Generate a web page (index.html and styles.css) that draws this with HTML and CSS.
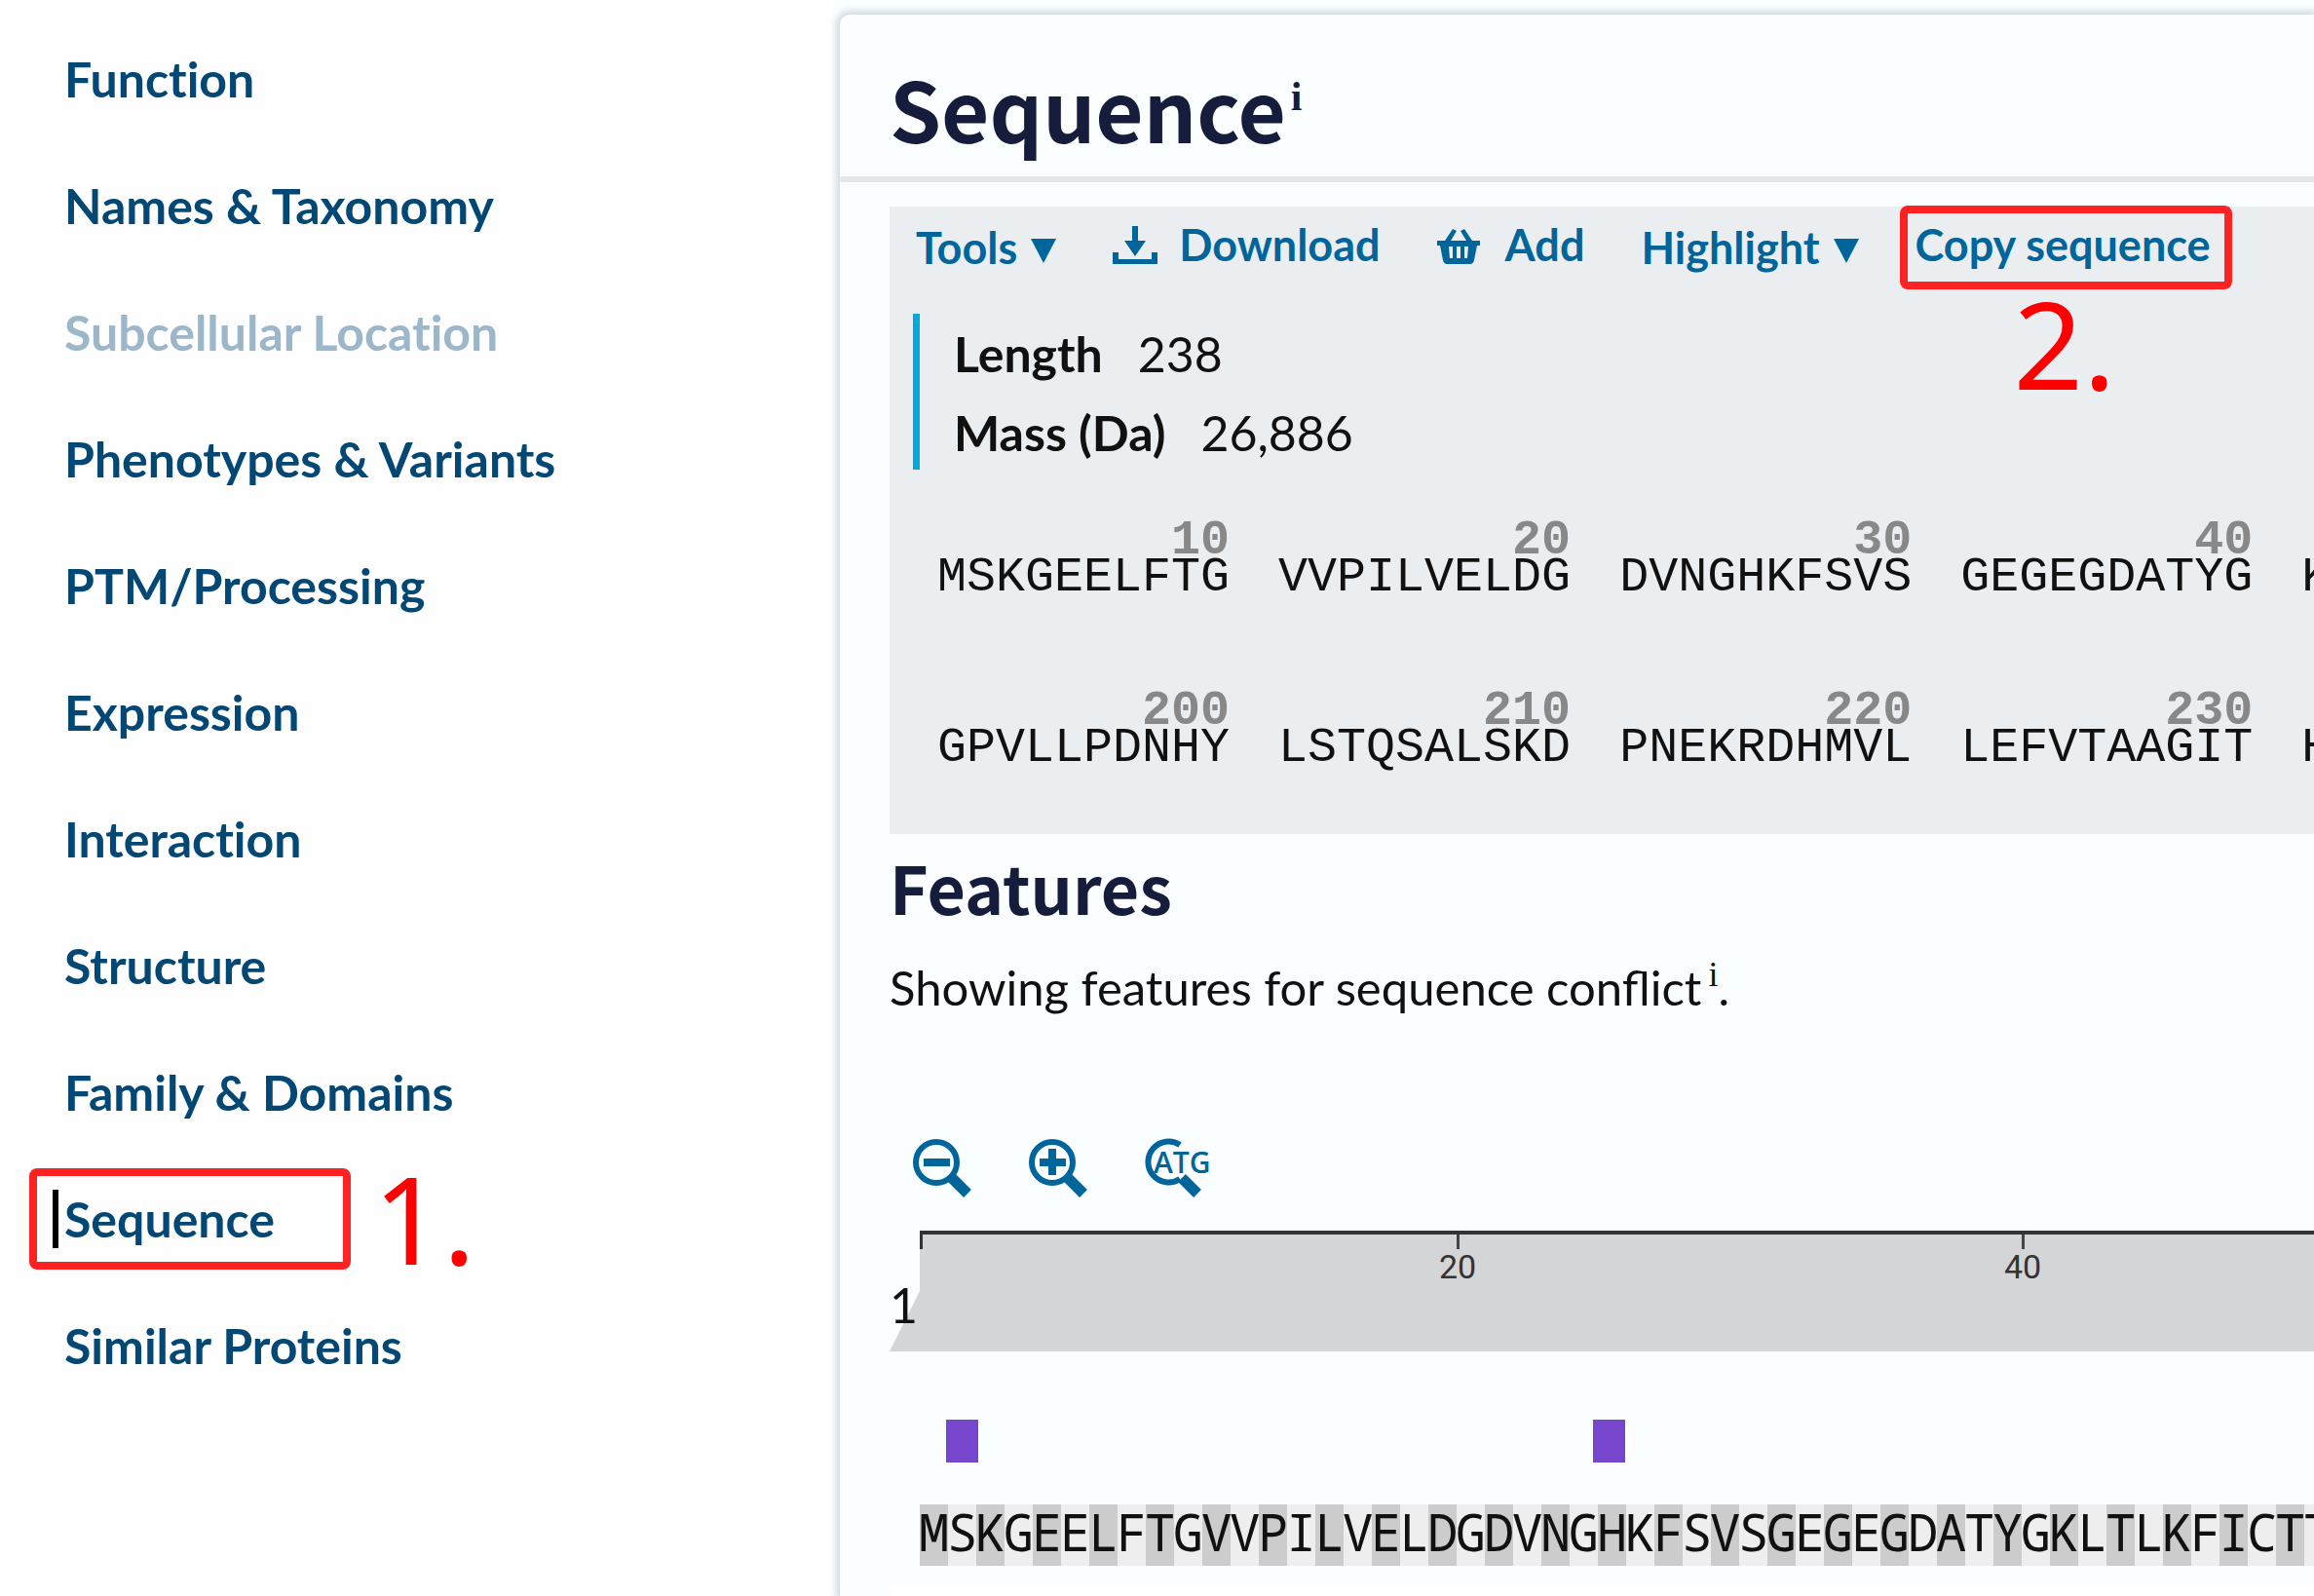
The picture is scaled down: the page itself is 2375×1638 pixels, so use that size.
FILE: index.html
```
<!DOCTYPE html>
<html lang="en">
<head>
<meta charset="utf-8">
<title>Sequence</title>
<link rel="stylesheet" href="styles.css">
</head>
<body>
<div class="page">
  <nav class="sidebar" aria-label="Sections">
    <ul class="nav-list">
      <li><a class="nav-link" href="#function">Function</a></li>
      <li><a class="nav-link" href="#names">Names &amp; Taxonomy</a></li>
      <li><a class="nav-link nav-link-disabled" href="#location">Subcellular Location</a></li>
      <li><a class="nav-link" href="#variants">Phenotypes &amp; Variants</a></li>
      <li><a class="nav-link" href="#ptm">PTM/Processing</a></li>
      <li><a class="nav-link" href="#expression">Expression</a></li>
      <li><a class="nav-link" href="#interaction">Interaction</a></li>
      <li><a class="nav-link" href="#structure">Structure</a></li>
      <li><a class="nav-link" href="#family">Family &amp; Domains</a></li>
      <li class="marked"><a class="nav-link nav-link-active" href="#sequence">Sequence</a><span class="callout callout-nav"></span><span class="step step-nav">1.</span></li>
      <li><a class="nav-link" href="#similar">Similar Proteins</a></li>
    </ul>
  </nav>
  <main class="main">
    <section class="card" id="sequence">
      <header class="card-header"><h1 class="title">Sequence<sup class="info">i</sup></h1></header>
      <div class="card-body">
        <div class="panel">
          <div class="toolbar">
            <button class="tool tool-menu" type="button">Tools<span class="caret"></span></button>
            <button class="tool" type="button">
              <svg class="tool-icon" viewBox="0 0 46 40" aria-hidden="true"><path d="M20 0h6v15h8L23 31 12 15h8z"/><path d="M0 27h6v7h34v-7h6v12H0z"/></svg>Download</button>
            <button class="tool" type="button">
              <svg class="tool-icon basket" viewBox="0 0 44 40" aria-hidden="true"><path fill-rule="evenodd" d="M0 15h8L16 3l4 2-6 10h16L24 5l4-2 8 12h8v5h-3l-3 15q-1 4-4 4H10q-3 0-4-4L3 20H0zM12 21l1 12h3V21zm8 0v12h4V21zm8 0v12h3l1-12z"/></svg>Add</button>
            <button class="tool tool-menu" type="button">Highlight<span class="caret"></span></button>
            <span class="marked"><button class="tool" type="button">Copy sequence</button><span class="callout callout-copy"></span><span class="step step-copy">2.</span></span>
          </div>
          <dl class="facts">
            <div class="fact"><dt>Length</dt><dd>238</dd></div>
            <div class="fact"><dt>Mass (Da)</dt><dd>26,886</dd></div>
          </dl>
          <div class="chunks">
            <div class="chunk"><b>10</b><span>MSKGEELFTG</span></div>
            <div class="chunk"><b>20</b><span>VVPILVELDG</span></div>
            <div class="chunk"><b>30</b><span>DVNGHKFSVS</span></div>
            <div class="chunk"><b>40</b><span>GEGEGDATYG</span></div>
            <div class="chunk"><b></b><span>KLTLKFICTT</span></div>
          </div>
          <div class="chunks">
            <div class="chunk"><b>200</b><span>GPVLLPDNHY</span></div>
            <div class="chunk"><b>210</b><span>LSTQSALSKD</span></div>
            <div class="chunk"><b>220</b><span>PNEKRDHMVL</span></div>
            <div class="chunk"><b>230</b><span>LEFVTAAGIT</span></div>
            <div class="chunk"><b></b><span>HGMDELYK</span></div>
          </div>
        </div>
        <h2 class="subtitle">Features</h2>
        <p class="lead">Showing features for sequence conflict<sup class="info info-small">i</sup>.</p>
        <div class="zoom-tools">
          <button class="zoom-button" type="button" aria-label="Zoom out"><svg viewBox="0 0 68 62" aria-hidden="true"><circle cx="24" cy="25" r="21"/><path class="sign" d="M11 25h27"/><path class="handle" d="M40 41l16 16"/></svg></button>
          <button class="zoom-button" type="button" aria-label="Zoom in"><svg viewBox="0 0 68 62" aria-hidden="true"><circle cx="25" cy="25" r="21"/><path class="sign" d="M12 25h27M25 11v27"/><path class="handle" d="M41 41l16 16"/></svg></button>
          <button class="zoom-button" type="button" aria-label="Zoom to sequence"><svg viewBox="0 0 68 62" aria-hidden="true"><path d="M38 7A21 21 0 1 0 38 42"/><path class="handle" d="M40 41l16 16"/><text x="11" y="36">ATG</text></svg></button>
        </div>
        <div class="viewer">
          <div class="ruler">
            <span class="ruler-start">1</span>
            <div class="axis"><span class="tick">20</span><span class="tick">40</span></div>
          </div>
          <div class="track"><span class="feature"></span><span class="feature"></span></div>
          <div class="residues" id="residues"></div>
        </div>
        <div class="sheet"></div>
      </div>
    </section>
  </main>
</div>
<script src="script.js"></script>
</body>
</html>
```
FILE: styles.css
```
* { box-sizing: border-box; }
body {
  --residue: 29px;
  margin: 0;
  background: #fefefe;
  color: #111;
  font: 50px/60px Lato, sans-serif;
}
.page { display: grid; grid-template-columns: 36% minmax(0, 1fr); min-height: 100vh; overflow: hidden; }
.sidebar { padding: 16px 0 0 66px; }
.nav-list { margin: 0; padding: 0; list-style: none; font-variant-ligatures: none; }
.nav-list li { height: 130px; padding-top: 35px; }
.nav-link { color: #034875; font-weight: 700; text-decoration: none; }
.nav-link-disabled { color: #9db7ca; }
.nav-link-active { margin-left: -12px; border-left: 6px solid #000; padding-left: 6px; }
.marked { position: relative; }
.callout { position: absolute; border: 8px solid #f22; border-radius: 8px; pointer-events: none; }
.callout-nav { left: -36px; top: 13px; width: 330px; height: 104px; }
.callout-copy { left: -16px; top: -23px; width: 341px; height: 86px; }
.step { position: absolute; color: #f00; font: 125px/140px "Noto Sans", sans-serif; }
.step-nav { left: 317px; top: -6px; }
.step-copy { left: 101px; top: 48px; }
.main { padding-top: 15px; background: #fafeff; min-width: 0; }
.card { height: 100%; margin-left: 7px; border-radius: 10px 0 0 0; background: #fafeff; box-shadow: 0 0 8px 3px #cbd3da; }
.card-header { display: flex; align-items: center; height: 172px; padding: 24px 51px 0; border-bottom: 6px solid #e3e7ea; }
.title, .subtitle { margin: 0; color: #161c3b; font-family: "Noto Sans CJK JP", sans-serif; font-weight: 700; }
.title { font-size: 85px; line-height: 100px; }
.info { margin-left: 5px; font: 700 42px/34px "Liberation Serif", serif; vertical-align: 34px; }
.info-small { margin-left: 7px; font-size: 36px; font-weight: 400; line-height: 24px; vertical-align: 20px; }
.card-body { padding: 25px 0 0 51px; }
.panel { height: 644px; background: #ebeef1; padding: 22px 0 0 24px; }
.toolbar { display: flex; gap: 58px; height: 88px; padding-left: 3px; }
.tool { display: flex; align-items: center; height: 35px; padding: 0; border: 0; background: none; color: #00659b; font: 700 45px/35px Lato, sans-serif; white-space: nowrap; }
.tool-menu { height: 41px; }
.tool-icon { width: 46px; height: 40px; margin-right: 22px; fill: currentColor; }
.basket { width: 44px; margin-right: 26px; }
.caret { margin: 6px 0 0 14px; border: 13px solid transparent; border-top: 25px solid currentColor; border-bottom: 0; }
.facts { height: 160px; margin: 0; padding-left: 35px; border-left: 7px solid #00a9dc; }
.fact { display: flex; gap: 36px; height: 81px; padding-top: 11px; }
.fact dt { font-weight: 700; }
.fact dd { margin: 0; }
.chunks { display: flex; gap: 50px; padding-left: 25px; height: 175px; padding-top: 54px; font: 50px/38px "Liberation Mono", monospace; }
.chunk { flex: none; display: grid; grid-template-rows: 38px 38px; }
.chunk b { color: #888; text-align: right; }
.subtitle { margin-top: 14px; font-size: 68px; line-height: 80px; }
.lead { margin: 33px 0 0; font-size: 49px; }
.zoom-tools { display: flex; gap: 50px; margin: 125px 0 0 24px; }
.zoom-button { width: 68px; height: 62px; padding: 0; border: 0; background: none; }
.zoom-button svg { display: block; width: 68px; height: 62px; fill: none; stroke: #00659b; stroke-width: 6px; }
.zoom-button .sign { stroke-width: 8px; }
.zoom-button .handle { stroke-width: 11px; }
.zoom-button text { fill: #00659b; stroke: none; font: 600 30px "Open Sans", sans-serif; }
.viewer { margin-top: 33px; }
.ruler { position: relative; display: flex; height: 124px; }
.ruler::before { content: ""; position: absolute; inset: 0; background: #d4d5d7; clip-path: polygon(31px 0, 100% 0, 100% 100%, 0 100%, 31px 62px); }
.ruler-start { position: relative; align-self: flex-end; flex: none; width: 31px; margin-bottom: 18px; }
.axis { position: relative; flex: 1; display: flex; padding-left: calc(var(--residue) * 9 + 1px); border-top: 4px solid #333; }
.axis::before { content: ""; position: absolute; left: 0; top: 0; width: 3px; height: 15px; background: #333; }
.tick { flex: none; width: calc(var(--residue) * 20); color: #333; font: 34px/36px Roboto, sans-serif; text-align: center; }
.tick::before { content: ""; display: block; width: 3px; height: 15px; margin: 0 auto; background: #444; }
.track { display: flex; gap: 631px; padding: 70px 0 43px 58px; }
.feature { width: 33px; height: 44px; background: #7646cd; }
.residues { display: flex; margin-left: 31px; height: 63px; font: 52px/56px "Noto Sans Mono", "DejaVu Sans Mono", monospace; }
.residues span { flex: none; display: flex; justify-content: center; width: var(--residue); background: #eee; }
.residues span:nth-child(odd) { background: #ccc; }
.sheet { height: 12px; margin-top: 19px; background: #fff; }
```
FILE: script.js
```
const sequence = "MSKGEELFTGVVPILVELDGDVNGHKFSVSGEGEGDATYGKLTLKFICTT";
const strip = document.getElementById("residues");
for (const letter of sequence) {
  const cell = document.createElement("span");
  cell.textContent = letter;
  strip.append(cell);
}
```
